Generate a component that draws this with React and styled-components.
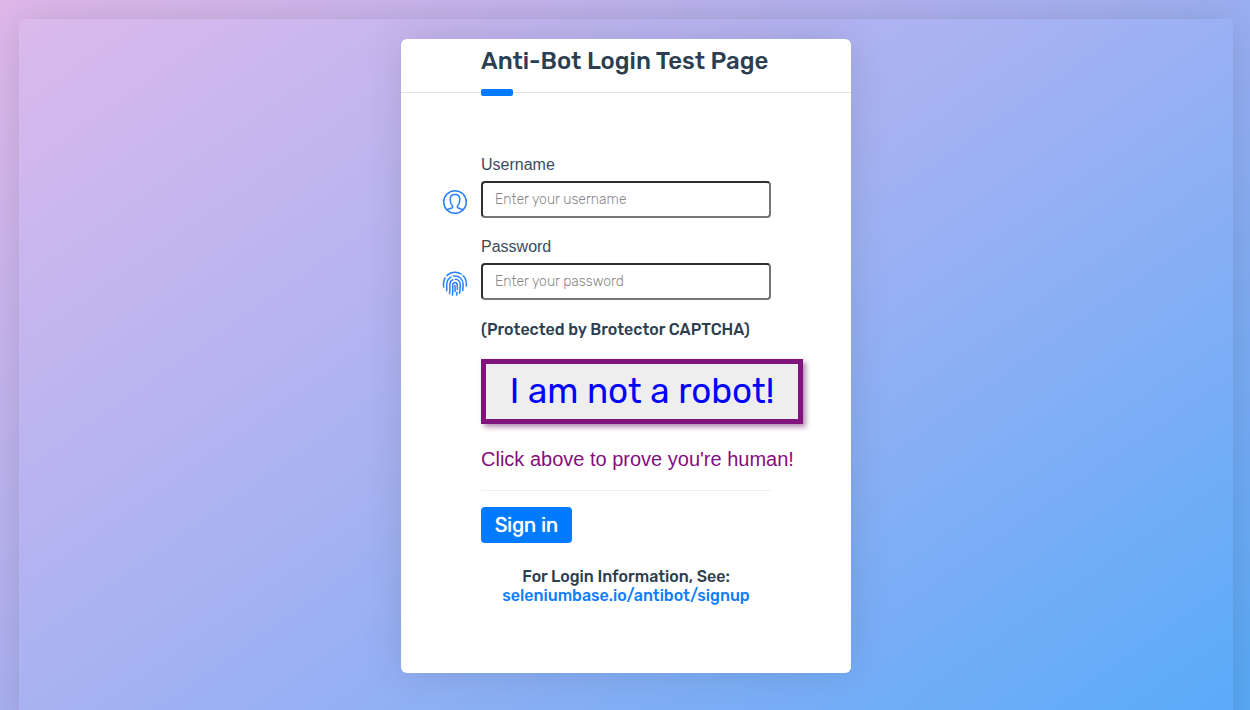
import React from "react";
import styled, { createGlobalStyle } from "styled-components";

const GlobalStyle = createGlobalStyle`
  *, *::before, *::after { box-sizing: border-box; }
  body {
    margin: 0;
    height: 100vh;
    padding: 19px 17px 0 19px;
    overflow: hidden;
    color: #2c3e50;
    font: 500 16px/20px Rubik, Roboto, "Liberation Sans", sans-serif;
    background: linear-gradient(145deg, #e0b8ea, #a9b0f0 46%, #58a9f6) no-repeat;
  }
`;

const Panel = styled.main`
  min-height: 100vh;
  padding: 20px 0 37px;
  border-radius: 5px;
  background: linear-gradient(145deg, #dbb9ec, #a9b2f2 44%, #5babf9 98%);
  box-shadow: 0 0 40px rgba(0, 0, 0, 0.12);
`;

const Card = styled.section`
  width: 450px;
  max-width: 100%;
  margin: 0 auto;
  padding-bottom: 68px;
  border-radius: 6px;
  background: #fff;
  box-shadow: 0 0 40px rgba(0, 0, 0, 0.12);
`;

const Header = styled.header`
  padding: 6px 80px 0;
  border-bottom: 1px solid #e2e4e6;
  height: 54px;
  &::after {
    content: "";
    display: block;
    width: 32px;
    height: 7px;
    margin-top: 12px;
    border-radius: 2px;
    background: #007bff;
  }
`;

const Title = styled.h1`
  margin: 0;
  font-size: 24px;
  line-height: 32px;
  font-weight: 500;
  white-space: nowrap;
`;

const Form = styled.form`
  padding: 62px 80px 0;
`;

const Field = styled.div`
  display: grid;
  grid-template-columns: 26px 1fr;
  column-gap: 13px;
  align-items: center;
  margin: 0 0 19px -39px;
`;

const Label = styled.label`
  grid-column: 2;
  padding-bottom: 6px;
  color: #3b4b5e;
  font: 400 16px/20px "Liberation Sans", sans-serif;
`;

const Input = styled.input`
  width: 100%;
  height: 37px;
  padding: 0 12px;
  border: 2px solid;
  border-color: #303030 #767676 #767676 #303030;
  border-radius: 4px;
  background: #fff;
  color: #2c3e50;
  font: 300 14px/20px Rubik, Roboto, sans-serif;
  &::placeholder { color: #8a8a8a; opacity: 1; }
`;

const Icon = styled.svg`
  width: 26px;
  height: 26px;
  margin-top: 4px;
  fill: none;
  stroke: #2680ff;
  stroke-width: 1.5;
  stroke-linecap: round;
  stroke-linejoin: round;
`;

const Notice = styled.p`
  margin: 20px 0 19px;
  white-space: nowrap;
`;

const RobotButton = styled.button`
  display: block;
  width: 322px;
  height: 65px;
  padding: 0 0 2px;
  border: 5px solid #80147c;
  background: #eee;
  color: #00f;
  font: 400 35px/48px Rubik, Roboto, sans-serif;
  white-space: nowrap;
  box-shadow: 3px 3px 5px rgba(110, 30, 100, 0.5);
`;

const Hint = styled.p`
  margin: 23px 0 18px;
  color: #850d80;
  font: 400 20px/25px "Liberation Sans", sans-serif;
  white-space: nowrap;
`;

const Divider = styled.hr`
  margin: 0 0 16px;
  border: 0;
  border-top: 1px solid #eee;
`;

const SignIn = styled.button`
  display: block;
  width: 91px;
  height: 36px;
  padding: 0;
  border: 0;
  border-radius: 4px;
  background: #007bff;
  color: #fff;
  font: 400 20px/24px Rubik, Roboto, sans-serif;
  text-shadow: 0 0 1px #fff;
`;

const Info = styled.p`
  margin: 24px 0 0;
  line-height: 19px;
  text-align: center;
  white-space: nowrap;
`;

const Link = styled.a`
  display: block;
  color: #0f7dfc;
  text-decoration: none;
`;

function UserIcon() {
  return (
    <Icon viewBox="0 0 26 26" aria-hidden="true">
      <circle cx="13" cy="13" r="11.3" />
      <path d="M5.200 20.900c1.300-1.200 3.300-1.300 4.600-1.900 1.100-.6 1.200-1.500.5-2.300-1.400-1.500-2.100-3.700-2.100-6.200 0-3.200 1.800-5 4.800-5s4.800 1.800 4.800 5c0 2.500-.7 4.700-2.100 6.200-.7.800-.6 1.700.5 2.300 1.300.6 3.300.7 4.600 1.900" />
    </Icon>
  );
}

function FingerprintIcon() {
  return (
    <Icon viewBox="0 0 26 26" aria-hidden="true">
      <path d="M1.800 16c-.6-3.200-.4-6.400 1.300-9.200M5 4.400C8.700 .8 15 .2 19.200 3M21.200 4.800C24 7.600 24.700 11.400 24.300 15" />
      <path d="M4.600 19.800c.5-1.800.1-3.800.1-6 0-3.500 1.500-6.300 4.300-7.700M11.500 5.100c5-.8 9.300 2.700 9.600 7.800.1 2.300 0 4.500-.4 6.600" />
      <path d="M7.500 22.500c.7-2.600.4-5.200.3-8-.1-2.800 1-4.900 3-5.800M13.300 8.200c2.800.1 4.800 2.300 4.900 5.100.1 3.300 0 6.300-.7 9" />
      <path d="M10.400 24c.6-3.100.4-6 .3-9.100-.1-2 .8-3.500 2.300-3.500s2.300 1.400 2.300 3.300c.1 1.300.1 2.600 0 3.800M15 21.200l-.3 2.900M13 14.600c.2 2.100.2 4.100 0 6" />
    </Icon>
  );
}

export default function App() {
  return (
    <>
      <GlobalStyle />
      <Panel>
        <Card>
          <Header>
            <Title>Anti-Bot Login Test Page</Title>
          </Header>
          <Form onSubmit={(event) => event.preventDefault()}>
            <Field>
              <Label htmlFor="username">Username</Label>
              <UserIcon />
              <Input id="username" type="text" placeholder="Enter your username" />
            </Field>
            <Field>
              <Label htmlFor="password">Password</Label>
              <FingerprintIcon />
              <Input id="password" type="password" placeholder="Enter your password" />
            </Field>
            <Notice>(Protected by Brotector CAPTCHA)</Notice>
            <RobotButton type="button">I am not a robot!</RobotButton>
            <Hint>Click above to prove you're human!</Hint>
            <Divider />
            <SignIn type="submit">Sign in</SignIn>
            <Info>
              For Login Information, See:
              <Link href="https://seleniumbase.io/antibot/signup">seleniumbase.io/antibot/signup</Link>
            </Info>
          </Form>
        </Card>
      </Panel>
    </>
  );
}
